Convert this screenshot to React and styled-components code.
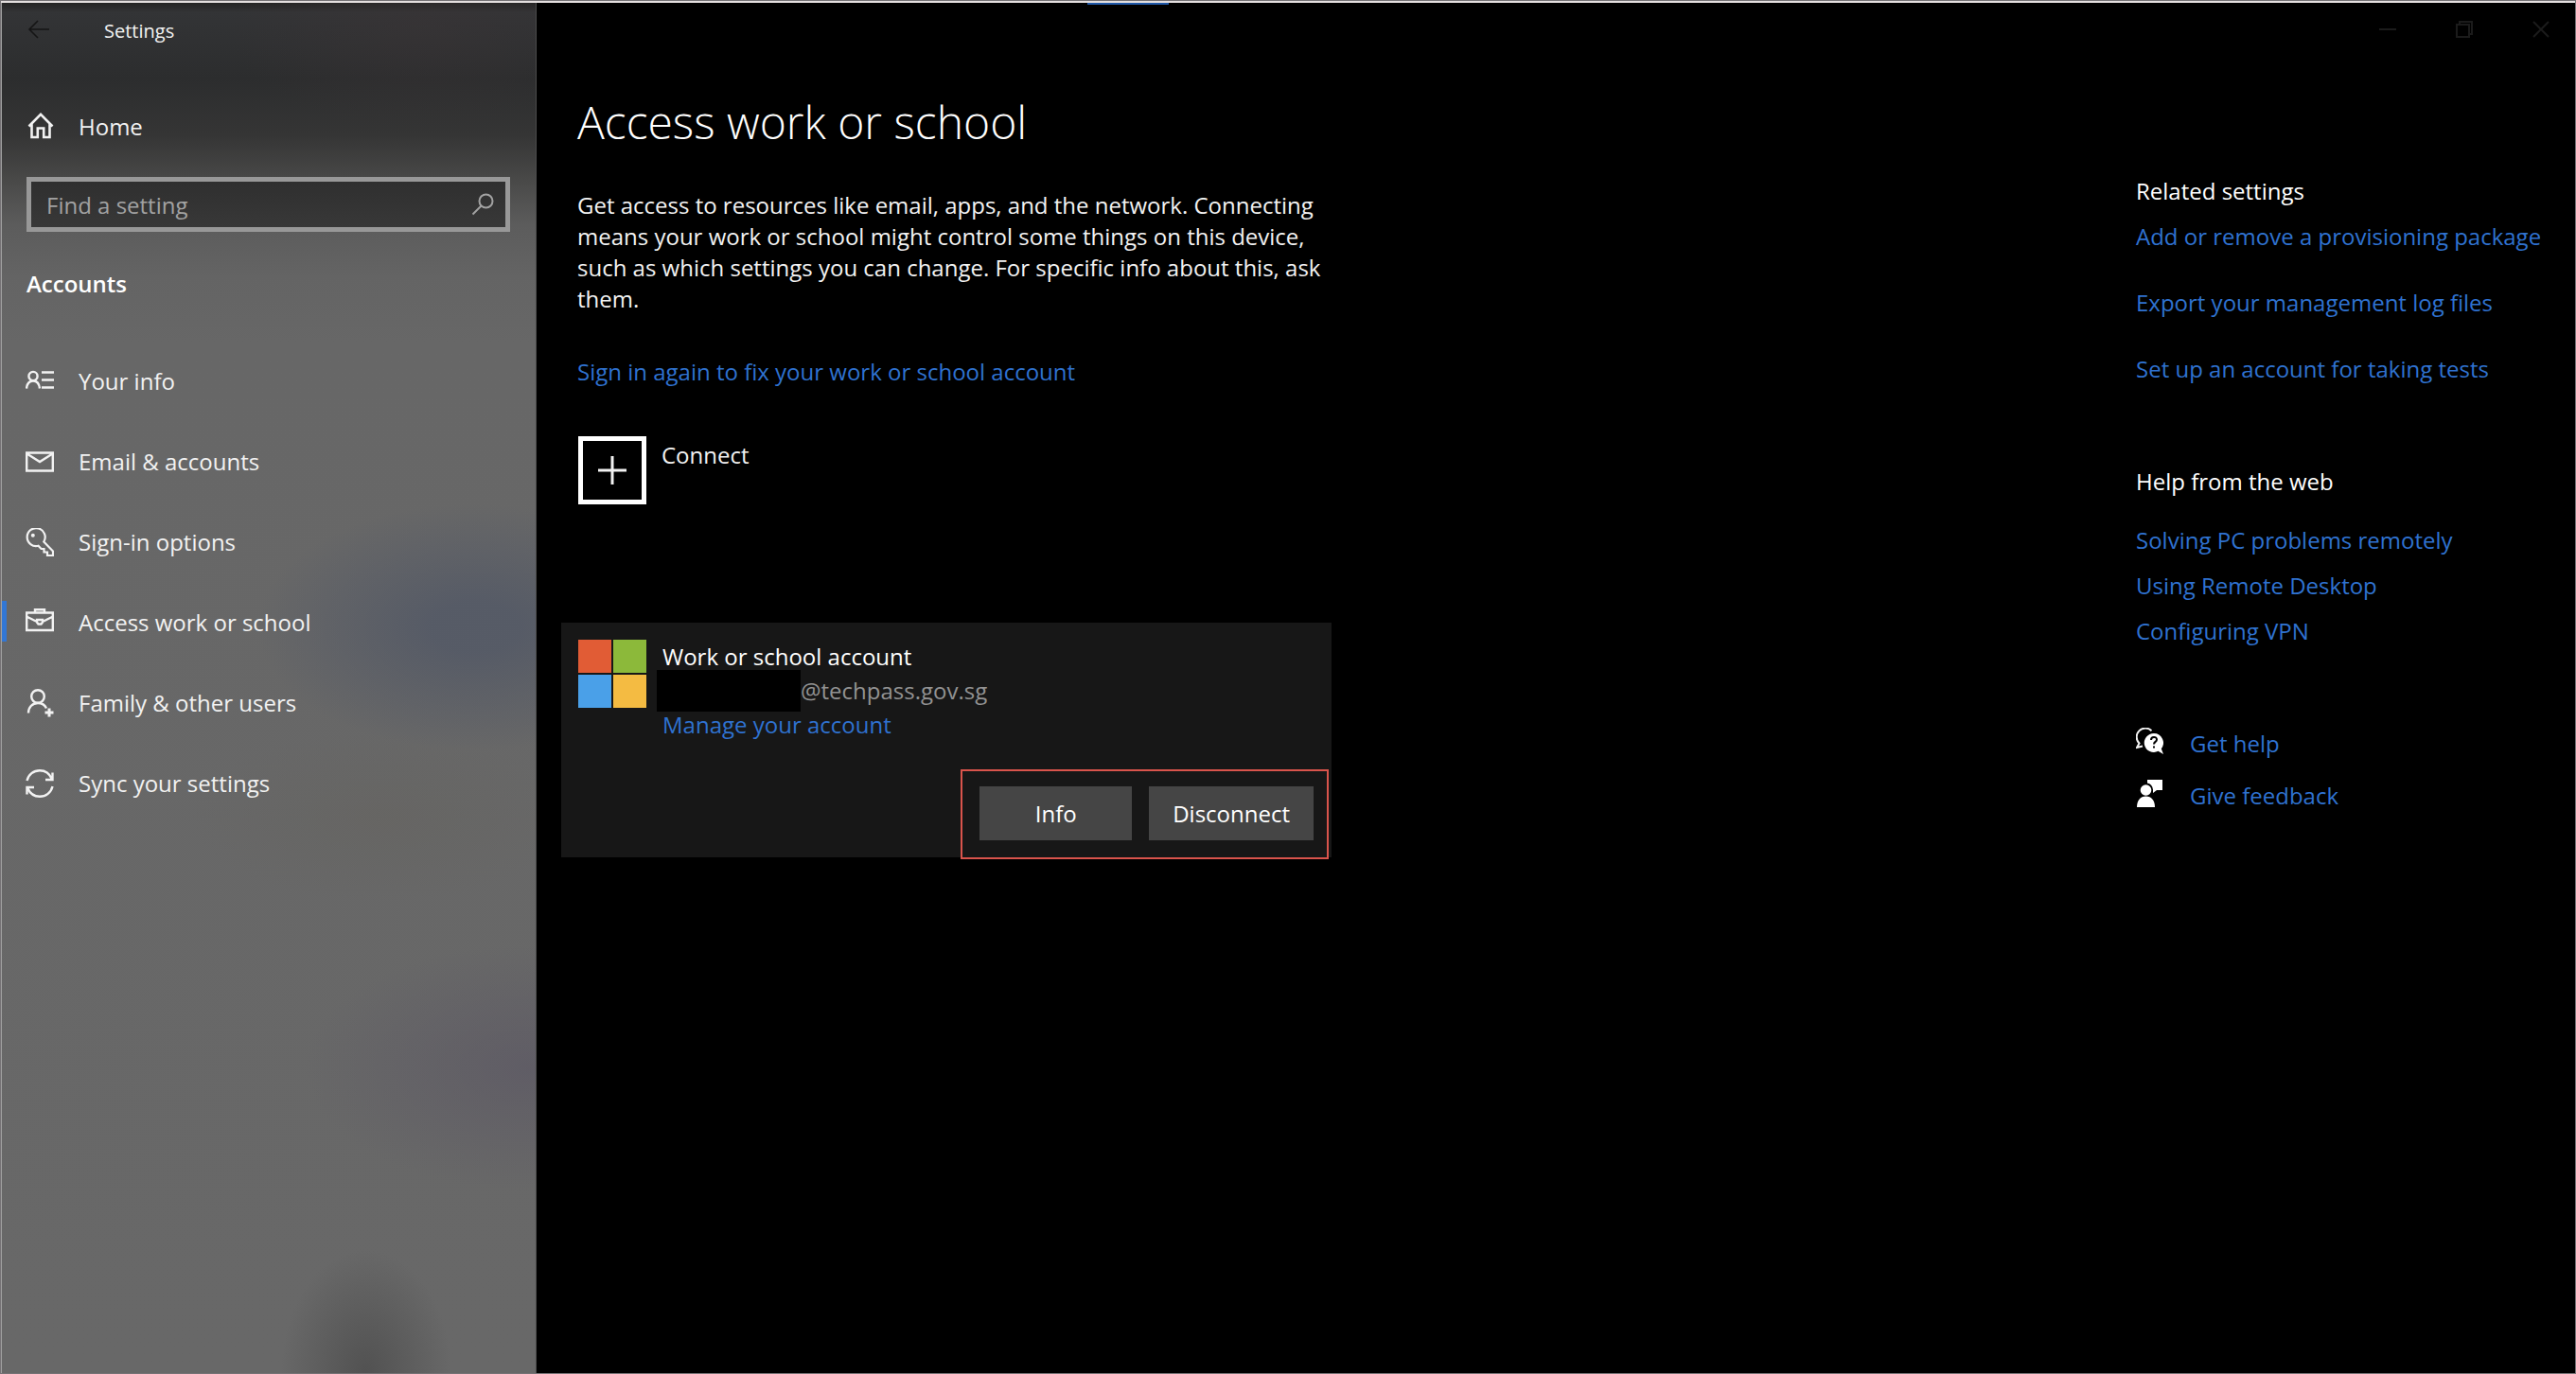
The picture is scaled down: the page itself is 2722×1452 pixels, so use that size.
import React from "react";
import styled, { createGlobalStyle } from "styled-components";

const GlobalStyle = createGlobalStyle`
  *, *::before, *::after { box-sizing: border-box; }
  body {
    margin: 0;
    background: #000;
    color: #f2f2f2;
    font-family: "Open Sans", "Noto Sans", sans-serif;
    font-size: 24px;
    line-height: 33px;
  }
  h1, h2, p, ul { margin: 0; padding: 0; font-weight: 400; }
  ul { list-style: none; }
  a { text-decoration: none; }
  button, input { font: inherit; color: inherit; border: 0; border-radius: 0; padding: 0; margin: 0; background: none; }
  svg { display: block; flex: none; }
`;

const Window = styled.div`
  display: flex;
  flex-direction: column;
  min-height: 100vh;
  border: 1px solid #757275;
`;

const TopEdge = styled.div`
  height: 2px;
  background: #e4dfdf;
`;

const Body = styled.div`
  display: flex;
  flex: 1;
`;

const Sidebar = styled.aside`
  width: 566px;
  flex: none;
  border-left: 1px solid #a0a0a0;
  border-right: 1px solid #4c4c4c;
  background:
    radial-gradient(ellipse 90px 130px at 385px 100%, rgba(76, 76, 76, 0.8), rgba(90, 90, 90, 0) 100%),
    radial-gradient(ellipse 230px 130px at 500px 660px, rgba(82, 88, 102, 0.8) 20%, rgba(94, 97, 103, 0) 100%),
    radial-gradient(ellipse 240px 130px at 560px 1125px, rgba(92, 88, 100, 0.7), rgba(100, 98, 102, 0) 100%),
    radial-gradient(ellipse 200px 90px at 400px 860px, rgba(100, 98, 93, 0.4), rgba(102, 101, 98, 0) 100%),
    radial-gradient(ellipse 200px 110px at 440px 25px, rgba(60, 52, 54, 0.4), rgba(50, 48, 48, 0) 100%),
    linear-gradient(
      180deg,
      #242424 0,
      #333436 10px,
      #2c2d2e 80px,
      #353535 140px,
      #4a4a49 190px,
      #5c5c5c 235px,
      #646464 290px,
      #676767 360px,
      #686868 100%
    );
`;

const SidebarCaption = styled.header`
  display: flex;
  align-items: center;
  gap: 58px;
  height: 58px;
  padding-left: 28px;
  font-size: 20px;
`;

const IconButton = styled.button`
  display: flex;
  align-items: center;
  justify-content: center;
  width: ${(p) => p.$width}px;
  height: ${(p) => p.$height}px;
  color: ${(p) => p.$color};
`;

const NavLink = styled.a`
  position: relative;
  display: flex;
  align-items: center;
  gap: 26px;
  height: ${(p) => p.$height}px;
  padding-left: 25px;
  color: #f2f2f2;

  &[aria-current="page"]::before {
    content: "";
    position: absolute;
    left: 0;
    top: 20px;
    width: 5px;
    height: 43px;
    background: #3277d5;
  }
`;

const HomeRow = styled.div`
  margin-top: 43px;
`;

const SearchBox = styled.label`
  display: flex;
  align-items: center;
  height: 58px;
  margin: 25px 27px 0 26px;
  padding: 0 12px 0 16px;
  border: 5px solid #989898;
  background: linear-gradient(#2f2f2f, #383838);
  color: #a2a2a2;
`;

const SearchInput = styled.input`
  flex: 1;
  min-width: 0;
  outline: none;
  &::placeholder { color: #a2a2a2; opacity: 1; }
`;

const GroupTitle = styled.h2`
  margin: 38px 26px 44px;
  font-size: 24px;
  font-weight: 600;
  color: #fff;
`;

const Page = styled.div`
  position: relative;
  display: flex;
  flex-direction: column;
  flex: 1;
  min-width: 0;
`;

const ActiveTab = styled.div`
  position: absolute;
  top: 0;
  left: 27%;
  width: 86px;
  height: 2px;
  background: #2159a8;
`;

const PageCaption = styled.header`
  display: flex;
  justify-content: flex-end;
  gap: 9px;
  height: 58px;
`;

const Columns = styled.div`
  display: flex;
  justify-content: space-between;
`;

const Main = styled.main`
  width: 840px;
  padding: 36px 0 36px 26px;
`;

const Intro = styled.div`
  padding-left: 17px;
`;

const Title = styled.h1`
  font-size: 48px;
  line-height: 64px;
  font-weight: 300;
  color: #fff;
`;

const Lead = styled.p`
  margin: 39px 0 44px;
`;

const Link = styled.a`
  color: #2f72d0;
`;

const ConnectButton = styled.button`
  display: flex;
  align-items: flex-start;
  gap: 16px;
  margin: 52px 18px 125px;
`;

const PlusTile = styled.span`
  display: flex;
  align-items: center;
  justify-content: center;
  width: 72px;
  height: 72px;
  border: 5px solid #fff;
`;

const ConnectLabel = styled.span`
  padding-top: 3px;
`;

const Card = styled.section`
  padding: 18px;
  background: #171717;
`;

const Account = styled.div`
  display: flex;
  gap: 17px;
  line-height: 36px;
`;

const AccountTitle = styled.h2`
  font-size: 24px;
  color: #fff;
`;

const AccountName = styled.p`
  display: flex;
  align-items: center;
  height: 36px;
  color: #929292;
`;

const Redaction = styled.span`
  width: 152px;
  height: 44px;
  margin-left: -6px;
  background: #000;
`;

const Actions = styled.div`
  display: flex;
  gap: 18px;
  width: fit-content;
  margin: 29px -15px -20px auto;
  padding: 16px 14px 18px 18px;
  border: 2px solid #d9544c;
`;

const ActionButton = styled.button`
  min-width: 161px;
  height: 57px;
  padding: 0 25px;
  background: #454545;
  color: #fff;
`;

const Related = styled.aside`
  width: 464px;
  flex: none;
  padding: 124px 20px 0 0;
`;

const AsideTitle = styled.h2`
  margin-bottom: ${(p) => p.$space}px;
  font-size: 24px;
  color: #fff;
`;

const LinkList = styled.ul`
  display: flex;
  flex-direction: column;
  gap: ${(p) => p.$gap}px;
  margin-bottom: 86px;
`;

const SupportItem = styled.li`
  display: flex;
  gap: 28px;
`;

const Icon = ({ size = 30, width = 2, children }) => (
  <svg width={size} height={size} viewBox={`0 0 ${size} ${size}`} fill="none" stroke="currentColor" strokeWidth={width} aria-hidden="true">
    {children}
  </svg>
);

const HomeIcon = () => (
  <Icon width={2.6}>
    <path d="M3.5 15.5 16 2.8l12.5 12.7M6.5 13v14h6.3v-9.5h6.4V27h6.3V13" />
  </Icon>
);

const InfoIcon = () => (
  <Icon width={2.4}>
    <circle cx="8" cy="9.5" r="4.6" />
    <path d="M1 22.5c.6-5 3-8 7-8s6.400 3 7 8M17 5.500h13M17 13.500h13M17 21.500h13" />
  </Icon>
);

const MailIcon = () => (
  <Icon width={2.4}>
    <path d="M1.200 5.500h27.600v19H1.200zM1.500 6.500 15 15l13.500-8.500" />
  </Icon>
);

const KeyIcon = () => (
  <Icon width={2.2}>
    <path d="M19.300 14.500 29 24.500V29h-6v-3.500h-3.500V22H16.500l-3-3.200A9.500 9.500 0 1 1 19.300 14.500Z" />
    <circle cx="7.800" cy="7.800" r="2" fill="currentColor" stroke="none" />
  </Icon>
);

const BriefcaseIcon = () => (
  <Icon width={2.4}>
    <path d="M1.200 4.500h27.600v18.500H1.200zM10 4.500V1.200h10v3.300M1 8.500l11 5.500M29 8.500 18 14M12 12h6v2.500L16.500 16.500h-3L12 14.500z" />
  </Icon>
);

const FamilyIcon = () => (
  <Icon width={2.4}>
    <circle cx="13" cy="8" r="6.800" />
    <path d="M3 25.500C3 19.500 7 15 13 15c4.500 0 7.500 2 9 5.500" />
    <path d="M25 20.500v9M20.500 25h9" strokeWidth="3" />
  </Icon>
);

const SyncIcon = () => (
  <Icon width={2.4}>
    <path d="M1.500 12C3 5.500 8.500 1.200 15 1.200c6 0 10.500 3.500 12.800 9M28.500 3.500V11h-7.500M28.500 18C27 24.500 21.500 28.800 15 28.800c-6 0-10.500-3.500-12.800-9M1.500 26.500V19H9" />
  </Icon>
);

const SearchIcon = () => (
  <Icon size={24}>
    <circle cx="15.500" cy="8.500" r="7" />
    <path d="M10.500 13.500 1.500 22.500" />
  </Icon>
);

const BackIcon = () => (
  <Icon size={24} width={1.6}>
    <path d="M2 11h21M11 2l-9 9 9 9" />
  </Icon>
);

const MinimizeIcon = () => (
  <Icon size={18}>
    <path d="M0 9h18" />
  </Icon>
);

const RestoreIcon = () => (
  <Icon size={18}>
    <path d="M1 4h13v13H1zM4 4V1h13v13h-3" />
  </Icon>
);

const CloseIcon = () => (
  <Icon size={18}>
    <path d="m1 1 16 16M17 1 1 17" />
  </Icon>
);

const PlusIcon = () => (
  <Icon size={30} width={3}>
    <path d="M15 0v30M0 15h30" />
  </Icon>
);

const WindowsLogo = () => (
  <svg width="72" height="72" viewBox="0 0 72 72" aria-hidden="true">
    <path fill="#e15c35" d="M0 0h35v35H0z" />
    <path fill="#8cb93a" d="M37 0h35v35H37z" />
    <path fill="#4aa0e8" d="M0 37h35v35H0z" />
    <path fill="#f4bb42" d="M37 37h35v35H37z" />
  </svg>
);

const HelpIcon = () => (
  <Icon size={29}>
    <path d="M16.500 3.200A9 9 0 1 0 3.500 16.500L1 21l6-1.500" />
    <path fill="#fff" stroke="none" d="M19 6a10 10 0 1 0 4.500 18.800L29 28l-2.200-5.800A10 10 0 0 0 19 6Z" />
    <path stroke="#000" d="M16 13c0-4 6-4 6-.5 0 2.500-3 2.300-3 5M19 19.500v2" />
  </Icon>
);

const FeedbackIcon = () => (
  <svg width="29" height="29" viewBox="0 0 29 29" fill="#fff" aria-hidden="true">
    <path d="M12 0h16v11h-6l-4 3v-3.500C17.500 6.500 15.500 4 12 3.500z" />
    <circle cx="10.500" cy="11" r="5.800" />
    <path d="M1 29c0-7 3.500-11.500 9.500-11.500S20 22 20 29z" />
  </svg>
);

const navItems = [
  { label: "Your info", icon: InfoIcon },
  { label: "Email & accounts", icon: MailIcon },
  { label: "Sign-in options", icon: KeyIcon },
  { label: "Access work or school", icon: BriefcaseIcon, current: true },
  { label: "Family & other users", icon: FamilyIcon },
  { label: "Sync your settings", icon: SyncIcon },
];

const relatedLinks = [
  "Add or remove a provisioning package",
  "Export your management log files",
  "Set up an account for taking tests",
];

const helpLinks = ["Solving PC problems remotely", "Using Remote Desktop", "Configuring VPN"];

const supportLinks = [
  { label: "Get help", icon: HelpIcon },
  { label: "Give feedback", icon: FeedbackIcon },
];

const captionButtons = [
  { label: "Minimize", icon: MinimizeIcon },
  { label: "Restore", icon: RestoreIcon },
  { label: "Close", icon: CloseIcon },
];

const TextLinks = ({ items, gap }) => (
  <LinkList $gap={gap}>
    {items.map((label) => (
      <li key={label}>
        <Link href="#">{label}</Link>
      </li>
    ))}
  </LinkList>
);

export default function App() {
  return (
    <>
      <GlobalStyle />
      <Window>
        <TopEdge />
        <Body>
          <Sidebar>
            <SidebarCaption>
              <IconButton type="button" aria-label="Back" $width={22} $height={24} $color="#151515">
                <BackIcon />
              </IconButton>
              <span>Settings</span>
            </SidebarCaption>
            <HomeRow>
              <NavLink href="#" $height={58}>
                <HomeIcon />
                Home
              </NavLink>
            </HomeRow>
            <SearchBox>
              <SearchInput type="text" placeholder="Find a setting" aria-label="Find a setting" />
              <SearchIcon />
            </SearchBox>
            <GroupTitle>Accounts</GroupTitle>
            <nav>
              {navItems.map(({ label, icon: Glyph, current }) => (
                <NavLink key={label} href="#" $height={85} aria-current={current ? "page" : undefined}>
                  <Glyph />
                  {label}
                </NavLink>
              ))}
            </nav>
          </Sidebar>
          <Page>
            <ActiveTab />
            <PageCaption>
              {captionButtons.map(({ label, icon: Glyph }) => (
                <IconButton key={label} type="button" aria-label={label} $width={72} $height={56} $color="#1b1b1b">
                  <Glyph />
                </IconButton>
              ))}
            </PageCaption>
            <Columns>
              <Main>
                <Intro>
                  <Title>Access work or school</Title>
                  <Lead>
                    Get access to resources like email, apps, and the network. Connecting means your work or
                    school might control some things on this device, such as which settings you can change. For
                    specific info about this, ask them.
                  </Lead>
                  <Link href="#">Sign in again to fix your work or school account</Link>
                </Intro>
                <ConnectButton type="button">
                  <PlusTile>
                    <PlusIcon />
                  </PlusTile>
                  <ConnectLabel>Connect</ConnectLabel>
                </ConnectButton>
                <Card>
                  <Account>
                    <WindowsLogo />
                    <div>
                      <AccountTitle>Work or school account</AccountTitle>
                      <AccountName>
                        <Redaction />
                        @techpass.gov.sg
                      </AccountName>
                      <Link href="#">Manage your account</Link>
                    </div>
                  </Account>
                  <Actions>
                    <ActionButton type="button">Info</ActionButton>
                    <ActionButton type="button">Disconnect</ActionButton>
                  </Actions>
                </Card>
              </Main>
              <Related>
                <AsideTitle $space={15}>Related settings</AsideTitle>
                <TextLinks items={relatedLinks} gap={37} />
                <AsideTitle $space={29}>Help from the web</AsideTitle>
                <TextLinks items={helpLinks} gap={15} />
                <LinkList $gap={22}>
                  {supportLinks.map(({ label, icon: Glyph }) => (
                    <SupportItem key={label}>
                      <Glyph />
                      <Link href="#">{label}</Link>
                    </SupportItem>
                  ))}
                </LinkList>
              </Related>
            </Columns>
          </Page>
        </Body>
      </Window>
    </>
  );
}
